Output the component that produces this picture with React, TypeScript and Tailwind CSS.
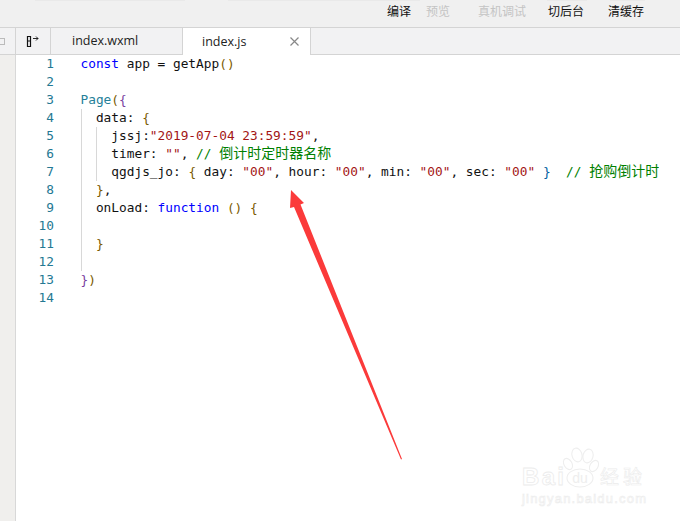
const K = ({ children }: { children: React.ReactNode }) => <span className="text-[#0000ff]">{children}</span>;
const S = ({ children }: { children: React.ReactNode }) => <span className="text-[#a31515]">{children}</span>;
const C = ({ children }: { children: React.ReactNode }) => <span className="text-[#008000] text-[14px] leading-none">{children}</span>;
const T = ({ children }: { children: React.ReactNode }) => <span className="text-[#267f99]">{children}</span>;
const Y = ({ children }: { children: React.ReactNode }) => <span className="text-[#7a5a00]">{children}</span>;

const lines: React.ReactNode[] = [
  <><K>const</K> app = getApp<Y>()</Y></>,
  <></>,
  <><T>Page</T><Y>(</Y><span className="text-[#7a3fa0]">{"{"}</span></>,
  <>{"  data: "}<Y>{"{"}</Y></>,
  <>{"    jssj:"}<S>"2019-07-04 23:59:59"</S>,</>,
  <>{"    timer: "}<S>""</S>, <span className="text-[#008000]">// </span><C>倒计时定时器名称</C></>,
  <>{"    qgdjs_jo: "}<Y>{"{"}</Y> day: <S>"00"</S>, hour: <S>"00"</S>, min: <S>"00"</S>, sec: <S>"00"</S> <span className="text-[#0060a0]">{"}"}</span>{"  "}<span className="text-[#008000]">// </span><C>抢购倒计时</C></>,
  <>{"  "}<Y>{"}"}</Y>,</>,
  <>{"  onLoad: "}<K>function</K> <Y>()</Y> <Y>{"{"}</Y></>,
  <></>,
  <>{"  "}<Y>{"}"}</Y></>,
  <></>,
  <><span className="text-[#7a3fa0]">{"}"}</span><Y>)</Y></>,
  <></>,
];

const cjk = "font-['Noto_Sans_CJK_SC','Liberation_Sans',sans-serif]";

export default function App() {
  return (
    <div className={`relative w-[680px] h-[521px] overflow-hidden bg-white ${cjk}`}>
      <div className="relative h-[28px] bg-[#f0f0f0] border-b border-[#d4d4d4] flex items-center text-[12px] leading-[24px] pb-[5px] text-[#111]">
        <div className="absolute left-[35px] top-0 w-[150px] h-[1px] bg-[#e9e9e9]" />
        <div className="absolute left-[228px] top-0 w-[192px] h-[1px] bg-[#e9e9e9]" />
        <div className="absolute left-[547px] top-0 w-[40px] h-[1px] bg-[#e9e9e9]" />
        <div className="absolute left-[610px] top-0 w-[35px] h-[1px] bg-[#e9e9e9]" />
        <span className="ml-[387px] w-[39px]">编译</span>
        <span className="w-[52px] text-[#c4c4c4]">预览</span>
        <span className="w-[70px] text-[#c4c4c4]">真机调试</span>
        <span className="w-[60px]">切后台</span>
        <span>清缓存</span>
      </div>
      <div className="flex h-[27px] bg-[#f2f2f3] border-b border-[#d4d4d4] text-[12.5px] text-[#222] font-['Open_Sans','Liberation_Sans',sans-serif]">
        <div className="w-[16px] border-r border-[#d4d4d4] overflow-hidden flex items-center">
          <div className="w-[8px] h-[7px] ml-[-3px] border border-[#bbb]" />
        </div>
        <div className="w-[35px] border-r border-[#d4d4d4] flex items-center justify-center">
          <svg width="14" height="12" viewBox="0 0 14 12" fill="none" stroke="#111" strokeWidth="1.2">
            <path d="M1.5 1.5h3v10h-3zM1.5 6h3" />
            <path d="M7 3.5h5M10 1.5l2 2-2 2" strokeWidth="0.9" />
          </svg>
        </div>
        <div className="w-[131px] flex items-center pl-[21px] pt-[1px]">index.wxml</div>
        <div className="w-[129px] h-[27px] bg-white border-l border-r border-[#d4d4d4] flex items-center justify-between pl-[19px] pr-[10px]">
          <span className="pt-[1px]">index.js</span>
          <svg width="11" height="11" viewBox="0 0 11 11" stroke="#888" strokeWidth="1.2">
            <path d="M1.5 1.5l8 8M9.5 1.5l-8 8" />
          </svg>
        </div>
      </div>
      <div className="flex">
        <div className="w-[16px] h-[466px] bg-[#f0efed] border-r border-[#d8d8d8]" />
        <div className="w-[38px] text-right text-[12.8px] leading-[18px] text-[#237893] font-['DejaVu_Sans_Mono',monospace]">
          {lines.map((_, i) => <div key={i} className="h-[18px]">{i + 1}</div>)}
        </div>
        <div className="relative ml-[26.5px] text-[12.8px] leading-[18px] text-[#111] whitespace-pre font-['DejaVu_Sans_Mono','Noto_Sans_CJK_SC',monospace]">
          <div className="absolute left-0 top-[54px] h-[162px] border-l border-[#d8d8d8]" />
          <div className="absolute left-[15px] top-[72px] h-[54px] border-l border-[#d8d8d8]" />
          {lines.map((l, i) => <div key={i} className="h-[18px] overflow-hidden">{l}</div>)}
        </div>
      </div>
      <svg className="absolute left-0 top-0" width="680" height="521" viewBox="0 0 680 521">
        <path d="M291 190L304 203L300.5 204.5L402 459L401 459.5L294 207L290 208Z" fill="#fb3a3a" />
      </svg>
      <svg className="absolute left-[520px] top-[445px]" width="130" height="70" viewBox="0 0 130 70" fill="#fff" stroke="#eeeeee" strokeWidth="1.1">
        <ellipse cx="57" cy="10" rx="5" ry="7" transform="rotate(-15 57 10)" />
        <ellipse cx="68" cy="11" rx="5" ry="7" transform="rotate(15 68 11)" />
        <ellipse cx="48" cy="19" rx="4" ry="6" transform="rotate(-30 48 19)" />
        <ellipse cx="74" cy="21" rx="4" ry="6" transform="rotate(30 74 21)" />
        <ellipse cx="60" cy="33" rx="13" ry="9" />
        <text x="60" y="38" fontSize="14" fontFamily="Liberation Sans" textAnchor="middle" fill="#eeeeee" stroke="none">du</text>
        <text x="2" y="40" fontSize="24" fontFamily="Liberation Sans" fontWeight="700" fill="#fff" stroke="#ececec" strokeWidth="0.8" textLength="42">Bai</text>
        <text x="80" y="39" fontSize="19" fontFamily="Noto Sans CJK SC" fill="#fff" stroke="#ececec" strokeWidth="0.6" textLength="42">经验</text>
        <text x="2" y="58" fontSize="13" fontFamily="Liberation Sans" fill="#fff" stroke="#ececec" strokeWidth="0.6" textLength="124">jingyan.baidu.com</text>
      </svg>
    </div>
  );
}
